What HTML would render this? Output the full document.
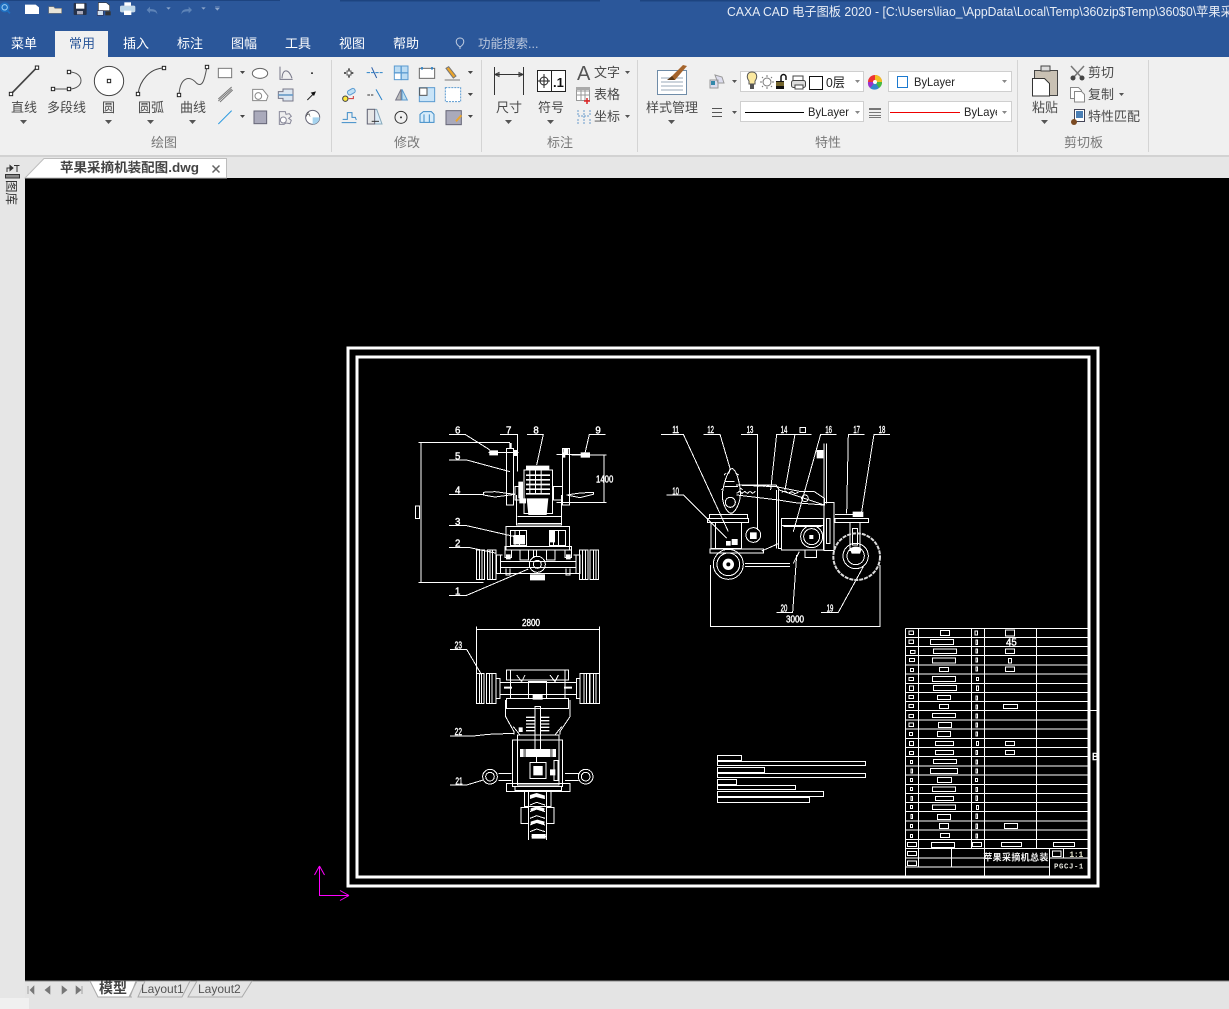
<!DOCTYPE html>
<html><head><meta charset="utf-8"><style>
html,body{margin:0;padding:0;background:#e6e6e6;width:1229px;height:1009px;overflow:hidden}
svg{display:block;position:absolute;left:0;top:0}
text{font-family:"Liberation Sans","Noto Sans CJK SC",sans-serif}
.t{font-size:13px;fill:#4a4a4a}
.g{font-size:13px;fill:#777}
.n{font-size:13px;fill:#fff}
.l{font-size:12px;fill:#222}
.d{font-size:29px;fill:#fff;stroke:#fff;stroke-width:1.2;font-family:"Liberation Sans",sans-serif}
.w{fill:none;stroke:#fff;stroke-width:3;shape-rendering:crispEdges}
.f{fill:#fff;stroke:none}
.i{stroke-width:3;fill:none}
</style></head><body>
<svg width="1229" height="1009" viewBox="0 0 1229 1009" xmlns="http://www.w3.org/2000/svg">
<!-- chrome -->
<rect width="1229" height="57" fill="#2b579a"/>
<path d="M0 0h280v1H0zM340 0h260v1.500H340zM640 0h250v1.500H640z" fill="#1d4480"/>
<rect y="57" width="1229" height="98" fill="#f0f0f0"/>
<rect y="155" width="1229" height="2" fill="#d2d2d2"/>
<rect y="157" width="1229" height="21" fill="#e6e6e6"/>
<rect x="0" y="178" width="25" height="831" fill="#e6e6e6"/>
<rect x="25" y="178" width="1204" height="803" fill="#000"/>
<rect x="25" y="981" width="1204" height="28" fill="#e4e4e4"/>
<rect x="25" y="980.500" width="1204" height="1" fill="#8a8a8a"/>
<rect x="0" y="998" width="29" height="11" fill="#f0f0f0"/>
<rect x="55" y="31" width="53" height="26" fill="#f0f0f0"/>
<!-- title + tabs -->
<text x="727" y="16" style="font-size:12.500px" fill="#e8edf5" textLength="518" lengthAdjust="spacingAndGlyphs">CAXA CAD 电子图板 2020 - [C:\Users\liao_\AppData\Local\Temp\360zip$Temp\360$0\苹果采摘</text>
<text class="n" x="11" y="48">菜单</text>
<text x="69" y="48" style="font-size:13px" fill="#2b579a">常用</text>
<text class="n" x="123" y="48">插入</text>
<text class="n" x="177" y="48">标注</text>
<text class="n" x="231" y="48">图幅</text>
<text class="n" x="285" y="48">工具</text>
<text class="n" x="339" y="48">视图</text>
<text class="n" x="393" y="48">帮助</text>
<path d="M460 49v-2c-6-4-4-9 0-9s6 5 0 9" fill="none" stroke="#c5d0e2" stroke-width="1"/>
<text x="478" y="48" style="font-size:12.500px" fill="#b9c6dc">功能搜索...</text>
<!-- ribbon labels -->
<text class="t" x="11" y="112">直线</text>
<text class="t" x="47" y="112">多段线</text>
<text class="t" x="102" y="112">圆</text>
<text class="t" x="138" y="112">圆弧</text>
<text class="t" x="180" y="112">曲线</text>
<text class="g" x="151" y="147">绘图</text>
<text class="g" x="394" y="147">修改</text>
<text class="g" x="547" y="147">标注</text>
<text class="g" x="815" y="147">特性</text>
<text class="g" x="1064" y="147">剪切板</text>
<text class="t" x="496" y="112">尺寸</text>
<text class="t" x="538" y="112">符号</text>
<text class="t" x="594" y="77">文字</text>
<text class="t" x="594" y="99">表格</text>
<text class="t" x="594" y="121">坐标</text>
<text x="577" y="80" style="font-size:20px" fill="#555">A</text>
<text class="t" x="646" y="112">样式管理</text>
<text class="t" x="1032" y="112">粘贴</text>
<text class="t" x="1088" y="77">剪切</text>
<text class="t" x="1088" y="99">复制</text>
<text class="t" x="1088" y="121">特性匹配</text>
<path d="M331.500 60v92M481.500 60v92M637.500 60v92M1017.500 60v92M1148.500 60v92" stroke="#d4d4d4" fill="none" stroke-width="1"/>
<!-- carets -->
<path d="M20 120h7l-3.500 4zM105 120h7l-3.500 4zM147 120h7l-3.500 4zM189 120h7l-3.500 4zM505 120h7l-3.500 4zM547 120h7l-3.500 4zM668 120h7l-3.500 4zM1041 120h7l-3.500 4zM240 71h5l-2.500 3zM240 115h5l-2.500 3zM468 71h5l-2.500 3zM468 93h5l-2.500 3zM468 115h5l-2.500 3zM625 71h5l-2.500 3zM625 115h5l-2.500 3zM732 80h5l-2.500 3zM732 111h5l-2.500 3zM1119 93h5l-2.500 3z" fill="#555"/>
<!-- combos -->
<g fill="#fff" stroke="#cfcfcf"><rect x="740.500" y="71.500" width="123" height="20"/><rect x="888.500" y="71.500" width="123" height="20"/><rect x="740.500" y="101.500" width="123" height="20"/><rect x="888.500" y="101.500" width="123" height="20"/></g>
<path d="M855 80h5l-2.500 3zM1002 80h5l-2.500 3zM855 111h5l-2.500 3zM1002 111h5l-2.500 3z" fill="#888"/>
<!-- layer combo icons -->
<path d="M749 84v-3c-3-4-2-9 3-9s6 5 3 9v3z" fill="#fbe9a0" stroke="#555"/><rect x="750" y="84" width="4" height="5" fill="#555"/>
<circle cx="767" cy="82" r="4" fill="#fff" stroke="#777"/><path d="M767 75v2M767 87v2M760 82h2M772 82h2M762 77l1 1M771 86l1 1M772 77l-1 1M763 86l-1 1" stroke="#777"/>
<path d="M776 81h8v8h-8z" fill="#111"/><path d="M781 81v-4a2.500 2.500 0 0 1 5 0v3" fill="none" stroke="#111" stroke-width="1.500"/><path d="M776 83h8M776 85h8" stroke="#d8b94a"/>
<rect x="793" y="76" width="10" height="5" fill="#fff" stroke="#444"/><rect x="791.500" y="80.500" width="14" height="7" rx="2" fill="#ddd" stroke="#444"/><rect x="795" y="85" width="8" height="4" fill="#fff" stroke="#444"/>
<rect x="809.500" y="76.500" width="13" height="13" fill="#fff" stroke="#111"/>
<text x="826" y="87" style="font-size:13px" fill="#222" textLength="19" lengthAdjust="spacingAndGlyphs">0层</text>
<circle cx="875" cy="82" r="7" fill="#e33"/><path d="M875 82V75a7 7 0 0 1 7 7z" fill="#f0c020"/><path d="M875 82h7a7 7 0 0 1-3 6z" fill="#4b4"/><path d="M875 82l4 6a7 7 0 0 1-9 0z" fill="#38c"/><path d="M875 82l-5 6a7 7 0 0 1-2-6z" fill="#93c"/><circle cx="875" cy="82" r="2" fill="#fff"/>
<rect x="897.500" y="76.500" width="10" height="11" fill="#fff" stroke="#1c7ad0"/>
<text class="l" x="914" y="86" textLength="41" lengthAdjust="spacingAndGlyphs">ByLayer</text>
<path d="M745 112.500h59" stroke="#000"/>
<text class="l" x="808" y="116" textLength="41" lengthAdjust="spacingAndGlyphs">ByLayer</text>
<path d="M890 112.500h70" stroke="#e00"/>
<svg x="964" y="100" width="33" height="20"><text class="l" x="0" y="16" textLength="41" lengthAdjust="spacingAndGlyphs">ByLayer</text></svg>
<path d="M712 108.500h10M712 112.500h10M712 116.500h10" stroke="#555"/>
<path d="M869 108h12v2h-12zM869 112h12v1h-12zM869 115h12v1h-12zM869 117h12v1h-12z" fill="#777"/>
<path d="M715 75l7 2 2 6h-6zM710 80h8v8h-8z" fill="#dde" stroke="#999"/><rect x="711" y="81" width="4" height="4" fill="#38a"/>
<!-- dim icons -->
<path d="M494.500 67v28M523.500 67v28M495 74.500h28M495 74.500l4-2v4zM523 74.500l-4-2v4z" stroke="#333" fill="none"/>
<rect x="537.500" y="70.500" width="28" height="21" fill="#fff" stroke="#222"/><path d="M551.500 70v21" stroke="#222"/><circle cx="544" cy="81" r="4" fill="none" stroke="#222"/><path d="M544 74v14M538 81h12" stroke="#222"/><text x="553" y="87" style="font-size:13px;font-weight:bold" fill="#111">.1</text>
<rect x="576.500" y="87.500" width="13" height="13" fill="#fff" stroke="#999"/><path d="M576 91h14M576 95h14M581 88v13M585 88v13" stroke="#999"/><rect x="576" y="87" width="14" height="3" fill="#aaa"/><path d="M587 98v6M584 101h6" stroke="#d22" stroke-width="1.500"/>
<path d="M578 116h12M584 110v14M578 110v5M590 110v5M578 119v5M590 119v5" stroke="#6a9ccc" stroke-dasharray="2 1" fill="none"/>
<!-- style manage -->
<rect x="657.500" y="70.500" width="29" height="24" fill="#fff" stroke="#6f8ca8"/><path d="M661 78h22M661 82h22M661 86h22M661 90h22" stroke="#98a8b8"/><path d="M668 80l3-3 12-12 4 1-12 14z" fill="#a5642c"/><path d="M667 80l5-4 3 4z" fill="#5b3a1a"/>
<!-- paste etc -->
<rect x="1034.500" y="70.500" width="23" height="25" fill="#c9c1b4" stroke="#444"/><rect x="1041" y="66" width="9" height="5" fill="#ddd" stroke="#444"/><path d="M1032.500 78.500h12l5 5v12.500h-17z" fill="#fff" stroke="#333"/>
<path d="M1071 66l11 12M1084 66l-11 12" stroke="#777" stroke-width="1.500"/><circle cx="1073" cy="78" r="2.500" fill="#444"/><circle cx="1082" cy="78" r="2.500" fill="#444"/>
<path d="M1070.500 87.500h8l3 3v8h-11z" fill="#fff" stroke="#888"/><path d="M1074.500 91.500h7l3 3v7.500h-10z" fill="#fff" stroke="#888"/>
<rect x="1074.500" y="109.500" width="10" height="12" fill="#fff" stroke="#445"/><rect x="1076" y="111" width="7" height="7" fill="#4a7fb5"/><circle cx="1074" cy="122" r="3" fill="#7a4a22"/>
<!-- left panel -->
<g stroke="#333" fill="none"><path d="M7 172v-4h4"/><path d="M10 165.500l3 2.500-3 2.500z" fill="#333"/><path d="M14 165.500h5.500M17 165.500v6.500"/><rect x="5.500" y="174.500" width="14" height="3.500" fill="#888"/></g>
<text transform="translate(7,180) rotate(90)" style="font-size:12.500px" fill="#333">图库</text>
<!-- doc tab -->
<path d="M25 178L44 158.500H226.500V178z" fill="#fff" stroke="#bdbdbd"/>
<text x="60" y="172" style="font-size:13px;font-weight:bold" fill="#444" textLength="139" lengthAdjust="spacingAndGlyphs">苹果采摘机装配图.dwg</text>
<path d="M212.500 165.500l7 7M219.500 165.500l-7 7" stroke="#666" stroke-width="1.500"/>
<!-- bottom tabs -->
<path d="M28 986v8M34 986l-4 4 4 4zM50 986l-5 4 5 4zM62 986l5 4-5 4zM76 986l5 4-5 4zM82 986v8" fill="#777" stroke="#777" stroke-width=".6"/>
<path d="M90 981l8 16h31l8-16z" fill="#fff" stroke="#aaa"/>
<path d="M136 981l-6 16h2M138 997h44l8-16H145zM188 997h54l10-16H197z" fill="none" stroke="#aaa"/>
<text x="99" y="993" style="font-size:14px;font-weight:bold" fill="#444">模型</text>
<text x="141" y="993" style="font-size:12px" fill="#555">Layout1</text>
<text x="198" y="993" style="font-size:12px" fill="#555">Layout2</text>
<!-- UCS -->
<path d="M319.500 866v29.500H349M319.500 866l-5 9M319.500 866l5 9M349 895.500l-9-5M349 895.500l-9 5" stroke="#f0f" fill="none"/>
<!-- frame -->
<rect x="348" y="348" width="750" height="538" fill="none" stroke="#fff" stroke-width="3"/>
<rect x="357" y="357" width="732" height="520" fill="none" stroke="#fff" stroke-width="3"/>

<!-- QAT + draw + modify icons in 3x coords -->
<g transform="scale(.33333)">
<circle cx="14" cy="22" r="15" fill="#1f6fc0"/><circle cx="14" cy="22" r="8" fill="none" stroke="#9ed0f5" stroke-width="3"/><path d="M20 30l10 10" stroke="#1f6fc0" stroke-width="5"/>
<path d="M75 14h32l10 8v20H75z" fill="#fff"/>
<path d="M146 20h15l4 5h20v15H146z" fill="#e8e4d8" stroke="#777" stroke-width="2"/>
<rect x="221" y="9" width="39" height="36" rx="3" fill="#26324a"/><rect x="228" y="11" width="25" height="15" fill="#fff"/><rect x="231" y="33" width="18" height="10" fill="#aab"/>
<path d="M295 8h24l10 8v16h-34z" fill="#fff" stroke="#333" stroke-width="2"/><path d="M292 32h18v14h-18z" fill="#cfe0f0" stroke="#335" stroke-width="2"/><rect x="316" y="34" width="16" height="12" fill="#333"/>
<rect x="373" y="7" width="20" height="12" fill="#fff"/><rect x="361" y="18" width="44" height="18" rx="4" fill="#bcd7ea" stroke="#c9d5e2" stroke-width="2"/><rect x="372" y="32" width="22" height="13" fill="#fff"/>
<path d="M440 30l10-10v7c14 0 22 4 22 16-4-8-10-9-22-9v6z" fill="#5d83b7"/>
<path d="M576 30l-10-10v7c-14 0-22 4-22 16 4-8 10-9 22-9v6z" fill="#5d83b7"/>
<path d="M499 22h13l-6.500 7zM604 22h13l-6.500 7zM645 24h14l-7 8zM645 20h14v2h-14z" fill="#8ea7cb"/>

<g stroke-width="3">
<path d="M33 282L110 203" stroke="#444" stroke-width="5"/>
<path d="M158 267h49M207 216c48 0 48 51 0 51" fill="none" stroke="#555"/>
<circle cx="327" cy="243" r="44" fill="#fff" stroke="#444"/>
<path d="M414 282c6-42 36-77 78-78" fill="none" stroke="#444"/>
<path d="M537 285c3-55 33-60 53-35 20 15 25-20 31-50" fill="none" stroke="#555"/>
<g fill="#fff" stroke="#222"><rect x="28" y="277" width="10" height="10"/><rect x="106" y="198" width="10" height="10"/><rect x="202" y="211" width="10" height="10"/><rect x="154" y="262" width="10" height="10"/><rect x="202" y="262" width="10" height="10"/><rect x="322" y="238" width="10" height="10"/><rect x="409" y="277" width="10" height="10"/><rect x="487" y="199" width="10" height="10"/><rect x="532" y="280" width="10" height="10"/><rect x="616" y="196" width="10" height="10"/></g>
<rect x="655" y="205" width="40" height="28" fill="#fff" stroke="#777"/>
<ellipse cx="780" cy="220" rx="23" ry="15" fill="#fff" stroke="#666"/>
<path d="M840 200v38h38M846 235c2-30 20-30 30 0" fill="none" stroke="#778"/>
<rect x="933" y="217" width="6" height="5" fill="#444"/>
<path d="M655 297l40-36M655 303l40-36M660 306l38-36" stroke="#777" fill="none"/>
<path d="M758 268h30l16 20-5 14h-41z" fill="#fff" stroke="#888"/><circle cx="775" cy="288" r="10" fill="none" stroke="#888"/>
<path d="M835 275h14v-8h30v36h-30v-8h-14z" fill="#dce6f0" stroke="#778"/><path d="M835 285h44" stroke="#6a9cc8" stroke-width="5"/>
<path d="M922 300l22-22" stroke="#222"/><path d="M948 274l-16 4 10 10z" fill="#111"/>
<path d="M655 372l40-40" stroke="#2e9be0"/>
<rect x="762" y="333" width="38" height="38" fill="#aab" stroke="#667"/>
<path d="M838 335h18l2 8 10-2 6 8-8 6 8 6-4 10-12-2-6 4h-14v-38z" fill="#eee" stroke="#889"/><circle cx="850" cy="360" r="9" fill="#fff" stroke="#889"/>
<circle cx="938" cy="352" r="21" fill="#fff" stroke="#667"/><path d="M938 352h21a21 21 0 0 1-21 21z" fill="#a6d3ee"/>
<text x="918" y="350" style="font-size:20px" fill="#333">A</text>

<path d="M1047 205v28M1032 219h30" stroke="#444" stroke-width="5" stroke-dasharray="6 5" fill="none"/><rect x="1041" y="213" width="12" height="12" fill="#fff" stroke="#555"/>
<path d="M1100 218h48" stroke="#2a82c8" stroke-dasharray="10 3"/><path d="M1115 202l15 32" stroke="#2a5ea8"/>
<g fill="#bcdcf3" stroke="#5a9ad0"><rect x="1183" y="198" width="20" height="20"/><rect x="1204" y="198" width="20" height="20"/><rect x="1183" y="219" width="20" height="20" fill="#fff"/><rect x="1204" y="219" width="20" height="20"/></g>
<rect x="1258" y="205" width="46" height="30" fill="#fff" stroke="#666"/><path d="M1266 201v8M1296 201v8" stroke="#2a82c8" stroke-width="5"/>
<path d="M1338 205l8-5 22 28-8 6z" fill="#eca52a" stroke="#777"/><path d="M1334 240h46" stroke="#777"/>
<circle cx="1036" cy="296" r="8" fill="#ffe93c" stroke="#444"/><rect x="1042" y="268" width="24" height="14" rx="6" fill="#bfe0f5" stroke="#5a9ad0" transform="rotate(-30 1054 275)"/><path d="M1046 296h14v-8" fill="none" stroke="#c33"/>
<path d="M1102 285h18" stroke="#333" stroke-dasharray="8 3"/><path d="M1128 268l18 32" stroke="#2a82c8"/>
<path d="M1203 268v32l-16 0z" fill="#bbb" stroke="#778"/><path d="M1206 268v32h16z" fill="#bde" stroke="#5a9ad0"/>
<rect x="1258" y="263" width="46" height="42" fill="#c9e4f8" stroke="#5a9ad0"/><rect x="1259" y="264" width="22" height="22" fill="#fff" stroke="#555"/>
<rect x="1336" y="263" width="46" height="42" fill="#fff" stroke="#5a9ad0" stroke-dasharray="6 3"/>
<path d="M1025 368h44M1028 358h14v-20h14v14h10l3 8" fill="none" stroke="#3d8cc8"/>
<path d="M1102 328h28l16 44h-44z" fill="#dcecf8" stroke="#8ab"/><rect x="1102" y="328" width="22" height="44" fill="#e6e6e6" stroke="#667"/><path d="M1115 364h22" stroke="#333"/>
<circle cx="1203" cy="352" r="18" fill="none" stroke="#333"/><circle cx="1203" cy="352" r="3" fill="#333"/>
<path d="M1260 343l10-8h24l8 8v24h-42z" fill="#d8ecfa" stroke="#3d8cc8"/><path d="M1272 343v24M1288 343v24" stroke="#3d8cc8"/>
<rect x="1338" y="332" width="46" height="42" fill="#aab" stroke="#667"/><path d="M1366 362l16-18 4 4-16 18z" fill="#eca52a"/>
</g>
<path d="M721 214h13l-6.500 7zM721 345h13l-6.500 7zM1404 214h13l-6.500 7zM1404 280h13l-6.500 7zM1404 345h13l-6.500 7z" fill="#444"/>
</g>

<!-- view 1 -->
<g transform="translate(400,415) scale(.33333)">
<path class="w" d="M147 58h48l75 47M300 58h53v112M381 58h49l-20 92M617 58h-49l-13 57M147 135h53l130 35M147 238h103M147 332h53l145 33M147 397h58l85 18M147 541h53l185-79M55 82h275M63 82v420M55 502h195M515 120h105M612 120v142M470 262h150"/>
<rect class="w" x="46" y="273" width="12" height="37"/>
<text class="d" x="165" y="56">6</text><text class="d" x="318" y="56">7</text><text class="d" x="400" y="56">8</text><text class="d" x="586" y="56">9</text><text class="d" x="165" y="133">5</text><text class="d" x="165" y="236">4</text><text class="d" x="165" y="330">3</text><text class="d" x="165" y="395">2</text><text class="d" x="165" y="539">1</text>
<text class="d" x="588" y="203" textLength="52" lengthAdjust="spacingAndGlyphs">1400</text>
<path class="w" d="M320 100v170h20V100zM487 100v170h21V100zM350 240v90h135v-90M318 335h190v70H318zM332 347h48v44h-48zM448 347h48v44h-48zM345 347v44M358 347v44M460 347v44M475 347v44M353 305h130M353 325h130M315 395h200v10H315zM298 420h10M290 420h12v55h-12zM530 420h-10M528 420h12v55h-12zM302 440h226M302 458h226M302 475h226M265 112h90M470 118h75M250 232l35-2 60 8-60 8-35-6zM580 232l-40 2-40 6 40 8 40-10zM315 405v22h20v-22M495 405v22h20v-22M318 460v20h12v-20M498 460v20h12v-20M345 215h22v40h-22zM460 215h27v40h-27z"/>
<path class="f" d="M268 106h26v15h-26zM542 112h28v16h-28zM378 152h70v13h-70zM355 200h14v50h-14zM380 250h65l-5 50h-55zM358 250h20v15h-20zM490 100h15v18h-15zM328 84h7v18h-7zM340 105h14v18h-14zM486 112h10v16h-10z"/>
<path class="w" d="M372 165h85v130h-85z"/>
<path class="f" d="M378 178h72v5h-72zM378 192h72v5h-72zM378 206h72v5h-72zM378 220h72v5h-72zM378 234h72v5h-72zM388 165h3v70h-3zM405 165h3v70h-3zM422 165h3v70h-3zM340 360h35v28h-35zM450 348h15v34h-15zM318 418h14v15h-14zM498 418h14v15h-14zM390 478h45v18h-45z"/>
<g class="w"><path d="M230 405h24v88h-24zM262 405h26v88h-26zM238 405v88M270 405v88M246 405v88M278 405v88M538 405h26v88h-26zM570 405h26v88h-26zM548 405v88M580 405v88M556 405v88M588 405v88M400 405h10v20h-10zM360 405h25v30h-25zM440 405h25v30h-25z"/><circle cx="412" cy="448" r="24"/><circle cx="412" cy="448" r="12"/></g>
</g>

<!-- view 2 -->
<g transform="translate(650,415) scale(.33333)">
<path class="w" d="M33 58h67l135 292M160 58h50l30 102M273 58h50v287M435 58h-55l-18 167M485 58h-50l-30 167M560 58h-48l-82 292M643 58h-48l-5 237M720 58h-48l-37 232M50 240h50l130 130M182 450v185h508V450M513 592h52l75-137M380 592h48l12-172"/>
<rect class="w" x="450" y="38" width="17" height="15"/>
<text class="d" x="67" y="54" textLength="20" lengthAdjust="spacingAndGlyphs">11</text><text class="d" x="172" y="54" textLength="20" lengthAdjust="spacingAndGlyphs">12</text><text class="d" x="290" y="54" textLength="20" lengthAdjust="spacingAndGlyphs">13</text><text class="d" x="392" y="54" textLength="20" lengthAdjust="spacingAndGlyphs">14</text><text class="d" x="526" y="54" textLength="20" lengthAdjust="spacingAndGlyphs">16</text><text class="d" x="610" y="54" textLength="20" lengthAdjust="spacingAndGlyphs">17</text><text class="d" x="686" y="54" textLength="20" lengthAdjust="spacingAndGlyphs">18</text><text class="d" x="67" y="238" textLength="20" lengthAdjust="spacingAndGlyphs">10</text><text class="d" x="530" y="590" textLength="20" lengthAdjust="spacingAndGlyphs">19</text><text class="d" x="392" y="590" textLength="20" lengthAdjust="spacingAndGlyphs">20</text>
<text class="d" x="408" y="622" textLength="54" lengthAdjust="spacingAndGlyphs">3000</text>
<path class="w" d="M172 310h124v12H172zM178 298h115v12H178zM183 322h92v78h-92zM197 322v78M180 402h160v12H180zM258 210h120l10 15 135 45v-20l-30-20h-40l-75-15zM260 240l125 15 50 8 85 7M385 225v175h10M380 225v175M335 408l50-22M285 445h135M285 455h135M395 310h125v95H395zM395 310h125v22H395zM400 335h115M522 85v180M530 85v180M522 262h30v145h-30zM530 310h10v75h-10zM555 310h100v12H555zM555 298h55M600 322h30v85h-30zM608 340h14v50h-14zM430 445l18-35M465 405v22h35v-22"/>
<path class="w" d="M218 230c-5 35 15 65 25 65s30-30 28-65c-2-25-10-65-25-70-12 5-25 45-28 70z"/>
<path class="w" d="M240 160l-3 15M258 175l8 5M228 175l-6 5M220 220l-6 4M272 220l6 4M224 200l30 0M224 215l40 0"/>
<g class="w"><circle cx="241" cy="262" r="15"/><circle cx="235" cy="448" r="45"/><circle cx="235" cy="448" r="34"/><circle cx="310" cy="360" r="22"/><circle cx="485" cy="365" r="33"/><circle cx="485" cy="365" r="24"/><circle cx="617" cy="423" r="38"/><circle cx="617" cy="423" r="26"/><circle cx="465" cy="250" r="10"/></g>
<circle cx="620" cy="425" r="70" fill="none" stroke="#ddd" stroke-width="6" stroke-dasharray="12 3"/>
<circle cx="235" cy="448" r="17" fill="#fff"/><circle cx="235" cy="448" r="6" fill="#000"/>
<path class="f" d="M228 378h14v14h-14zM245 372h18v18h-18zM608 290h32v16h-32zM400 330h35v5h-35zM600 402a20 14 0 0 1 35 0l-5 14h-25zM500 105h20v25h-20zM300 352h20v20h-20zM478 360h12v12h-12z"/>
<path class="w" d="M260 235l8-6 8 6 8-6 8 6 8-6 8 6 8-6M310 214l8-4 8 4 8-4 8 4 8-4 8 4M395 232l10-4 10 6 10-4 10 6 10-4"/>
</g>

<!-- view 3 -->
<g transform="translate(440,610) scale(.33333)">
<path class="w" d="M110 50v140M478 50v140M110 58h368M30 118h50l45 77M30 378h70l45-5 77-3M30 525h50l50-15"/>
<text class="d" x="246" y="48" textLength="54" lengthAdjust="spacingAndGlyphs">2800</text><text class="d" x="44" y="115" textLength="22" lengthAdjust="spacingAndGlyphs">23</text><text class="d" x="44" y="375" textLength="22" lengthAdjust="spacingAndGlyphs">22</text><text class="d" x="46" y="523" textLength="22" lengthAdjust="spacingAndGlyphs">21</text>
<path class="w" d="M110 190h22v90h-22zM118 190v90M125 190v90M140 190h28v90h-28zM148 190v90M156 190v90M168 205h12v60h-12zM410 205h10v60h-10zM420 190h28v90h-28zM432 190v90M440 190v90M450 190h28v90h-28zM460 190v90M468 190v90M180 218h230v35H180zM200 180h185v30H200zM212 180v85M375 180v85M200 265h185v30H200zM265 215h55v50h-55zM197 270v50l25 45v8M390 270v50l-30 45v8M218 390h150v140H218zM232 390h125v135H232zM232 375h125v15H232zM285 290h17v130h-17zM270 458h48v48h-48zM200 520h190v25H200zM225 530h140v12H225zM175 490h40M175 512h40M375 490h40M375 512h40M243 592h22v48h-22zM320 592h22v48h-22zM253 545h80v45H253zM265 545v145M320 545v145M342 452v60h12v-60zM290 440v18M230 195l15 20M255 195l-10 20M330 195l15 20M355 195l-10 20"/>
<path class="f" d="M240 417h108v24H240zM280 468h28v28h-28z"/>
<path d="M250 417h8v24h-8zM330 417h8v24h-8z" fill="#888"/>
<path class="f" d="M258 320h28v4h-28zM258 330h28v4h-28zM258 340h28v4h-28zM258 350h28v4h-28zM258 360h28v4h-28zM300 320h28v4h-28zM300 330h28v4h-28zM300 340h28v4h-28zM300 350h28v4h-28zM300 360h28v4h-28zM192 230h24v6h-24zM372 230h24v6h-24zM330 478h16v18h-16zM236 352h12v14h-12zM278 255h30v14h-30z"/>
<g class="w"><circle cx="150" cy="500" r="22"/><circle cx="150" cy="500" r="13"/><circle cx="437" cy="500" r="22"/><circle cx="437" cy="500" r="13"/></g>
<path class="w" d="M270 565l20-8 25 8M270 585l20-8 25 8M270 605l20-8 25 8M270 625l20-8 25 8M270 645l20-8 25 8M270 665l20-8 25 8M275 680h45"/>
<path d="M270 555l20-6 25 8-2 10-25-6-18 6zM272 595l20-6 22 6-2 10-22-6-18 6zM272 635l20-6 22 6-2 10-22-6-18 6zM275 672h42v14h-42z" fill="#fff"/>
<path class="w" d="M220 350l20 25M365 350l-20 25"/>
</g>

<!-- text block -->
<g transform="translate(700,745) scale(.33333)" class="w">
<rect x="52" y="31" width="73" height="15"/><rect x="52" y="49" width="445" height="13"/><rect x="52" y="67" width="142" height="15"/><rect x="52" y="85" width="445" height="13"/><rect x="52" y="103" width="58" height="15"/><rect x="52" y="121" width="235" height="13"/><rect x="52" y="139" width="318" height="16"/><rect x="52" y="157" width="277" height="15"/>
</g>

<!-- parts table -->
<g transform="translate(900,620) scale(.33333)">
<path class="w" d="M16 25h549M16 52h549M16 80h549M16 107h549M16 135h549M16 162h549M16 190h549M16 217h549M16 245h549M16 272h549M16 300h549M16 327h549M16 355h549M16 382h549M16 410h549M16 438h549M16 465h549M16 493h549M16 520h549M16 548h549M16 575h549M16 603h549M16 630h549M16 658h549M16 686h549M16 714h237M449 714h116M253 741h196M16 741h237M16 25v743M56 25v716M214 25v661M253 25v743M409 25v661M155 686v55M449 686v82M491 686v28M570 272h22"/>
<path class="w" d="M27 33h14v11H27zM121 31h28v16h-28zM225 33h8v12h-8zM316 30h28v18h-28zM27 60h14v11H27zM91 58h70v16H91zM228 60h5v13h-5zM31 91h14v10H31zM100 87h70v14h-70zM228 87h5v12h-5zM316 87h28v14h-28zM28 115h16v10H28zM97 114h70v15H97zM228 114h5v12h-5zM325 115h10v14h-10zM31 145h10v10H31zM118 142h28v13h-28zM228 141h5v12h-5zM316 141h28v14h-28zM27 172h14v10H27zM97 169h70v15H97zM229 172h7v10h-7zM28 198h13v14H28zM100 196h70v16h-70zM229 198h7v14h-7zM27 226h14v10H27zM112 226h40v13h-40zM228 228h5v12h-5zM27 253h14v10H27zM118 253h28v13h-28zM228 255h5v12h-5zM310 253h42v13h-42zM27 283h14v10H27zM97 280h70v13H97zM228 282h5v12h-5zM27 309h14v11H27zM115 307h40v16h-40zM228 309h5v12h-5zM28 337h10v10H28zM112 334h40v16h-40zM228 336h5v12h-5zM28 364h13v13H28zM106 364h55v13h-55zM229 364h7v13h-7zM316 364h28v13h-28zM28 394h13v10H28zM106 391h55v13h-55zM228 392h5v12h-5zM316 391h28v13h-28zM31 421h7v10h-7zM100 418h70v13h-70zM228 420h5v12h-5zM33 447h5v12h-5zM91 445h82v16H91zM228 447h5v12h-5zM31 475h7v10h-7zM112 472h43v15h-43zM226 475h7v10h-7zM31 502h7v10h-7zM97 501h70v14H97zM228 502h5v12h-5zM33 530h5v12h-5zM106 529h55v13h-55zM228 528h5v14h-5zM31 556h7v10h-7zM97 555h70v14H97zM229 556h7v12h-7zM33 584h5v12h-5zM112 583h40v15h-40zM228 582h5v14h-5zM31 613h7v10h-7zM118 610h28v15h-28zM228 612h5v14h-5zM313 610h40v15h-40zM31 643h7v10h-7zM121 640h28v13h-28zM228 642h5v12h-5zM22 667h28v13H22zM94 667h70v15H94zM217 667h28v13h-28zM304 667h60v13h-60zM460 667h64v13h-64zM22 694h28v13H22zM22 723h28v13H22zM457 693h26v16h-26z"/>
<text class="d" x="318" y="77">45</text>
<text class="d" x="576" y="420">B</text>
<text x="250" y="722" style="font-size:27px;font-weight:bold" fill="#f4f4f4" textLength="195" lengthAdjust="spacing">苹果采摘机总装</text>
<text x="508" y="711" style="font-size:24px;font-weight:bold;font-family:'Liberation Mono',monospace" fill="#e8e8d0" textLength="42">1:1</text>
<text x="462" y="745" style="font-size:22px;font-weight:bold;font-family:'Liberation Mono',monospace" fill="#e8e8e0" textLength="88">PGCJ-1</text>
</g>
</svg>
</body></html>
